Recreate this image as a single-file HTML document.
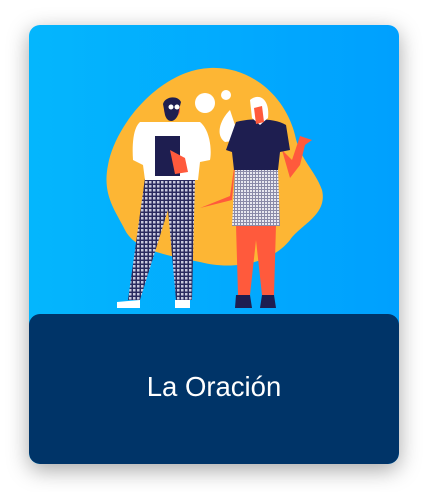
<!DOCTYPE html>
<html><head><meta charset="utf-8"><style>
html,body{margin:0;padding:0;background:#fff;width:428px;height:492px;overflow:hidden}
.card{position:absolute;left:29px;top:25px;width:370px;height:439px;border-radius:11px;background:linear-gradient(90deg,#04b6fd,#00a0fe);box-shadow:0 6px 22px rgba(0,0,0,.35);overflow:hidden}
.panel{position:absolute;left:0;top:289px;width:370px;height:150px;border-radius:11px;background:#003468;color:#fff;font-family:"Liberation Sans",sans-serif;font-size:27.5px;text-align:center;line-height:146px}
svg{position:absolute;left:0;top:0}
</style></head><body>
<div class="card">
<svg width="370" height="300" viewBox="29 25 370 300">
<defs>
<pattern id="chk" width="4" height="4" patternUnits="userSpaceOnUse"><rect width="4" height="4" fill="#2a2a5e"/><rect x="1" y="1" width="2.5" height="2.5" fill="#c8c8dc"/></pattern>
<pattern id="chk2" width="3" height="3" patternUnits="userSpaceOnUse"><rect width="3" height="3" fill="#e8e8f0"/><rect x="0" y="0" width="1" height="3" fill="#8a8aa8"/><rect x="0" y="0" width="3" height="1" fill="#8a8aa8"/></pattern>
</defs>
<path d="M210 68 C250 66 285 95 295 135 C300 160 315 170 322 190 C328 215 300 225 290 240 C270 265 230 270 200 262 C165 255 135 250 125 230 C115 210 102 195 108 165 C115 125 160 70 210 68Z" fill="#fdb634"/>
<circle cx="205" cy="103" r="10" fill="#fff"/><circle cx="226" cy="95" r="5" fill="#fff"/>
<path d="M230 110 C220 120 215 135 225 142 L240 140 Z" fill="#fff"/>
<path d="M145 178 L195 178 L192 300 L176 300 L168 210 L140 300 L128 300 Z" fill="url(#chk)"/>
<path d="M117 302 L140 300 L140 308 L117 308 Z" fill="#fff"/><path d="M175 300 L190 300 L190 308 L175 308Z" fill="#fff"/>
<path d="M140 122 L200 122 C210 130 212 150 210 160 L200 162 L198 180 L145 180 L143 165 L133 160 C132 145 133 128 140 122Z" fill="#fff"/>
<rect x="155" y="136" width="25" height="40" fill="#1e1e50"/>
<path d="M170 150 L185 158 L188 172 L175 174Z" fill="#ff5a3c"/>
<circle cx="172" cy="110" r="8" fill="#ff5a3c"/>
<path d="M163 104 C165 96 178 95 181 102 L179 110 C178 122 168 125 165 115Z" fill="#1e1e50"/>
<circle cx="171" cy="107" r="2.5" fill="#fff"/><circle cx="177" cy="107" r="2.5" fill="#fff"/>
<path d="M236 225 L276 225 L274 295 L262 295 L256 240 L250 295 L238 295Z" fill="#ff5a3c"/>
<path d="M236 295 L250 295 L252 308 L235 308Z" fill="#1e1e50"/><path d="M262 295 L274 295 L276 308 L260 308Z" fill="#1e1e50"/>
<path d="M235 168 L278 168 L280 226 L232 226Z" fill="url(#chk2)"/>
<path d="M238 130 L232 200 L212 205 L200 208 L230 196 L234 168Z" fill="#ff5a3c"/>
<path d="M282 150 L290 178 L300 165 L305 145 L312 140 L300 136 L292 160Z" fill="#ff5a3c"/>
<path d="M236 122 C250 118 275 118 286 125 L290 150 L280 152 L278 170 L234 170 L232 152 L226 150 Z" fill="#1e1e50"/>
<path d="M250 100 C260 92 270 100 268 118 L260 125 L252 118Z" fill="#fff"/>
<path d="M254 108 L262 106 L264 122 L256 124Z" fill="#ff5a3c"/>
</svg>
<div class="panel">La Oración</div>
</div>
</body></html>
